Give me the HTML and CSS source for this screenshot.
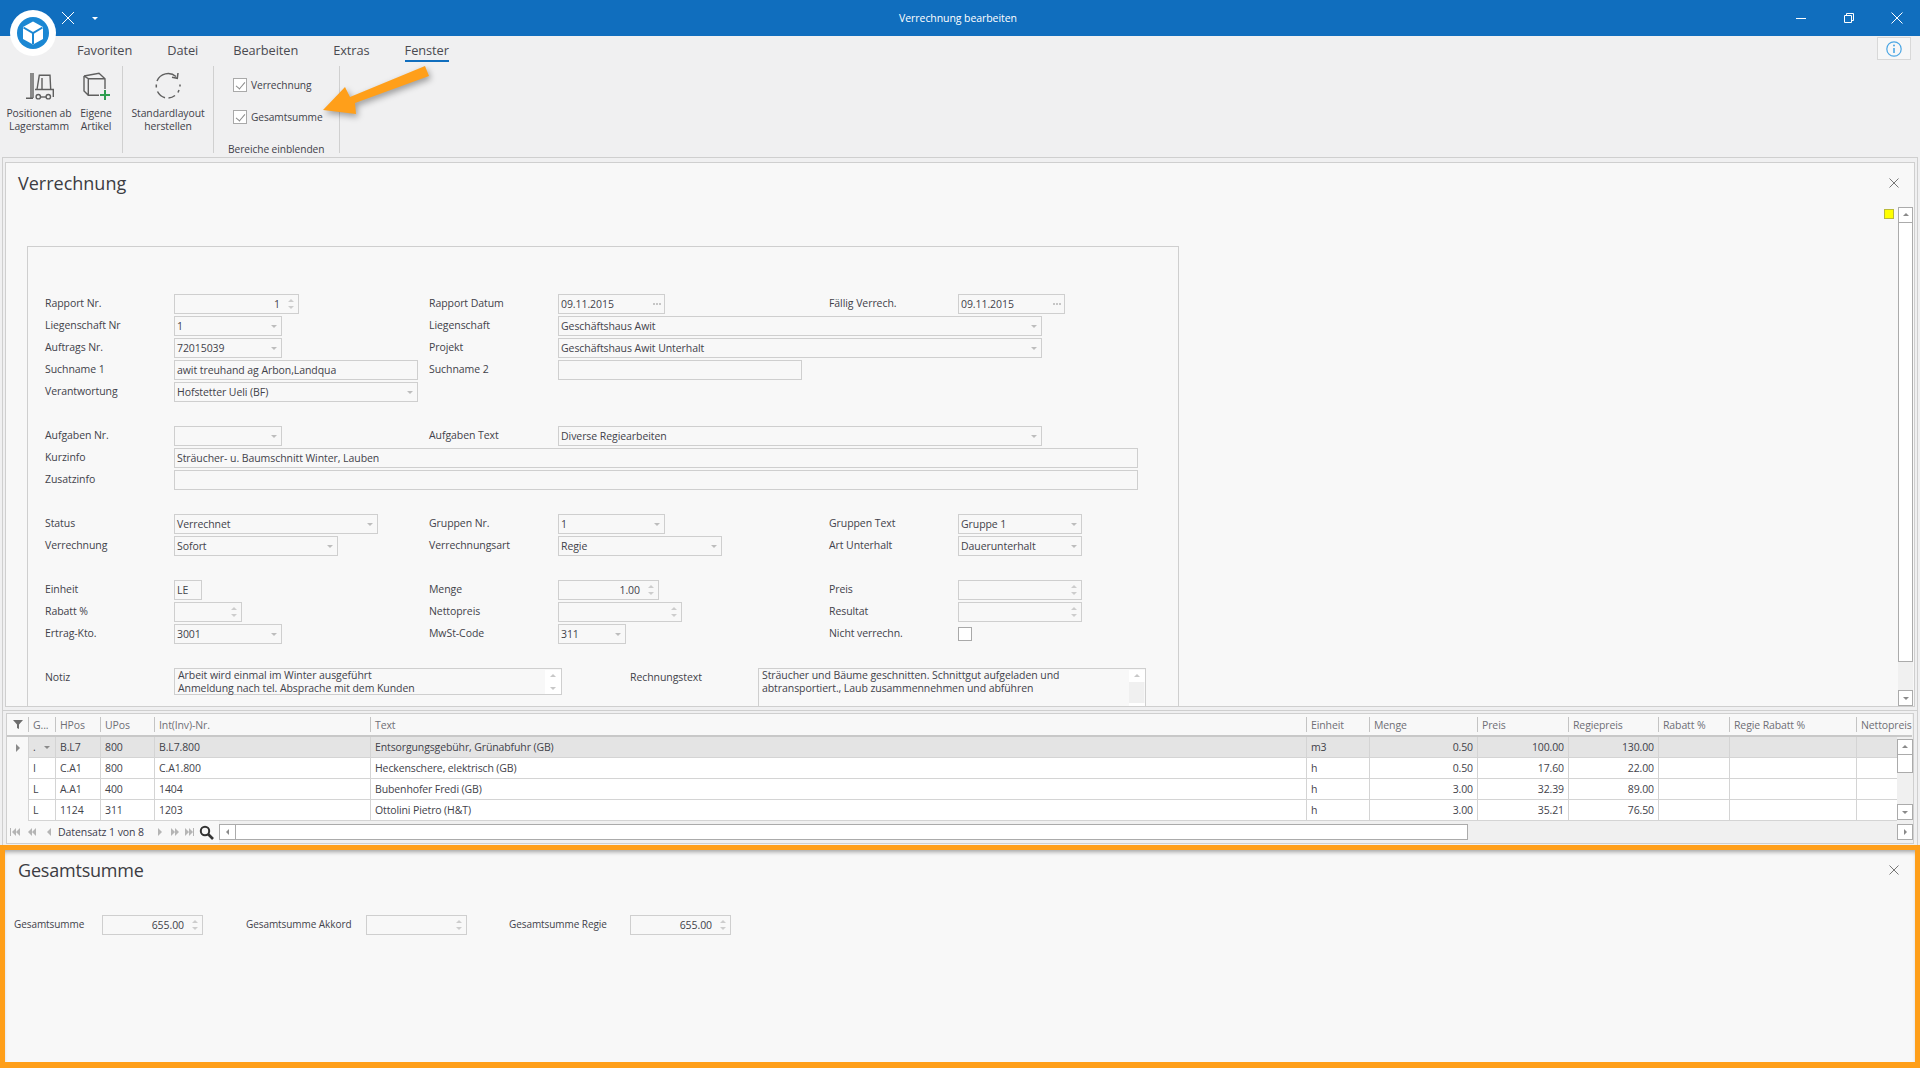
FILE: index.html
```html
<!DOCTYPE html>
<html lang="de">
<head>
    <meta charset="UTF-8">
    <title>Verrechnung bearbeiten</title>
    <link rel="stylesheet" href="styles.css">
</head>
<body>
    <svg class="logo" width="46" height="46" viewBox="0 0 46 46">
        <circle cx="23" cy="23" r="23" fill="#fff"/>
        <circle cx="23" cy="23" r="16" fill="#1b87d3"/>
        <path d="M23 11.5 33 17v12l-10 5.5L13 29V17z" fill="#fff"/>
        <path d="M13.5 17.5 23 23l9.5-5.5M23 23v11" fill="none" stroke="#1b87d3" stroke-width="2"/>
    </svg>

    <svg class="callout" width="120" height="60" viewBox="0 0 120 60">
        <path d="M3 49 25 26 30 36 105 5 109 15 35 42 36 53z" fill="#ff9f1a"/>
    </svg>

    <header class="titlebar">
        <div class="quick">
            <svg width="12" height="12" viewBox="0 0 12 12"><path d="M0 0 12 12M12 0 0 12" stroke="#fff" fill="none"/></svg>
            <span class="quick-arrow"></span>
        </div>
        <div class="window-title">Verrechnung bearbeiten</div>
        <div class="window-btns">
            <span class="window-btn"><svg width="12" height="12" viewBox="0 0 12 12"><path d="M1 6.5h10" stroke="#fff"/></svg></span>
            <span class="window-btn"><svg width="12" height="12" viewBox="0 0 12 12"><path d="M1.5 3.5h7v7h-7zM3.5 3.5v-2h7v7h-2" stroke="#fff" fill="none"/></svg></span>
            <span class="window-btn"><svg width="12" height="12" viewBox="0 0 12 12"><path d="M.5.5l11 11M11.500.5l-11 11" stroke="#fff" fill="none"/></svg></span>
        </div>
    </header>

    <section class="ribbon">
        <nav class="tabs">
            <span class="tab">Favoriten</span>
            <span class="tab">Datei</span>
            <span class="tab">Bearbeiten</span>
            <span class="tab">Extras</span>
            <span class="tab active">Fenster</span>
            <span class="info-btn">
                <svg width="18" height="18" viewBox="0 0 18 18">
                    <circle cx="9" cy="9" r="7.2" fill="none" stroke="#4aa6e4" stroke-width="1.2"/>
                    <path d="M9 8v5" stroke="#4aa6e4" stroke-width="1.6"/>
                    <circle cx="9" cy="5.400" r="1" fill="#4aa6e4"/>
                </svg>
            </span>
        </nav>
        <div class="groups">
            <div class="group group-lager">
                <div class="rb-btn btn-pos">
                    <svg class="rb-icon" width="32" height="32" viewBox="0 0 32 32" fill="none" stroke="#5f5f5f" stroke-width="1.400">
                        <path d="M7 3v25M9 3v25M2 28.300h7"/>
                        <path d="M13 19.500 15.300 5.300H26l.7 14.200"/>
                        <path d="M11 19.500h18.300V27M18 8v11"/>
                        <circle cx="14.300" cy="26.700" r="2.200"/>
                        <circle cx="24.300" cy="26.700" r="2.200"/>
                        <path d="M16.500 27h5.500"/>
                    </svg>
                    <span>Positionen ab<br>Lagerstamm</span>
                </div>
                <div class="rb-btn btn-own">
                    <svg class="rb-icon" width="32" height="32" viewBox="0 0 32 32" fill="none" stroke="#5f5f5f" stroke-width="1.400">
                        <path d="M3 6 18 3.300 24 8.700V19M7.300 8.700H24M7.300 8.700v16.600H18M3 6v15l4.300 4.300M3 6l4.300 2.700"/>
                        <path d="M24 20v10M19 25h10" stroke="#2e9e4f" stroke-width="2"/>
                    </svg>
                    <span>Eigene<br>Artikel</span>
                </div>
            </div>
            <div class="group group-layout">
                <div class="rb-btn">
                    <svg class="rb-icon" width="32" height="32" viewBox="0 0 32 32" fill="none" stroke="#5f5f5f" stroke-width="1.500">
                        <path d="M24 6.500A12 12 0 0 0 5 11M4.300 14.500v3M5.500 21.500A12 12 0 0 0 13 27.700M16.500 28A12 12 0 0 0 23 25.500M26 22.500 27 20M28 16.500v-2"/>
                        <path d="M20 7.300 25.300 8.300 26 3"/>
                    </svg>
                    <span>Standardlayout<br>herstellen</span>
                </div>
            </div>
            <div class="group group-areas">
                <label class="rb-check"><span class="check on"></span>Verrechnung</label>
                <label class="rb-check"><span class="check on"></span>Gesamtsumme</label>
                <div class="group-name">Bereiche einblenden</div>
            </div>
        </div>
    </section>

    <section class="pane pane-top">
        <div class="pane-inner">
            <div class="pane-head">
                <h2>Verrechnung</h2>
                <svg class="pane-close" width="10" height="10" viewBox="0 0 10 10"><path d="M.5.5l9 9M9.500.5l-9 9" stroke="#777" fill="none"/></svg>
            </div>
            <div class="pane-body">
                <div class="pane-content">
                    <form class="form-box">
                        <div class="form-row">
                            <span class="lbl">Rapport Nr.</span><div class="field spin w-125">1</div>
                            <span class="lbl">Rapport Datum</span><div class="field date w-107">09.11.2015</div>
                            <span class="lbl">Fällig Verrech.</span><div class="field date w-107">09.11.2015</div>
                        </div>
                        <div class="form-row">
                            <span class="lbl">Liegenschaft Nr</span><div class="field combo w-108">1</div>
                            <span class="lbl">Liegenschaft</span><div class="field combo w-484">Geschäftshaus Awit</div>
                        </div>
                        <div class="form-row">
                            <span class="lbl">Auftrags Nr.</span><div class="field combo w-108">72015039</div>
                            <span class="lbl">Projekt</span><div class="field combo w-484">Geschäftshaus Awit Unterhalt</div>
                        </div>
                        <div class="form-row">
                            <span class="lbl">Suchname 1</span><div class="field w-244">awit treuhand ag Arbon,Landqua</div>
                            <span class="lbl">Suchname 2</span><div class="field w-244"></div>
                        </div>
                        <div class="form-row">
                            <span class="lbl">Verantwortung</span><div class="field combo w-244">Hofstetter Ueli (BF)</div>
                        </div>

                        <div class="form-row spaced">
                            <span class="lbl">Aufgaben Nr.</span><div class="field combo w-108"></div>
                            <span class="lbl">Aufgaben Text</span><div class="field combo w-484">Diverse Regiearbeiten</div>
                        </div>
                        <div class="form-row">
                            <span class="lbl">Kurzinfo</span><div class="field w-964">Sträucher- u. Baumschnitt Winter, Lauben</div>
                        </div>
                        <div class="form-row">
                            <span class="lbl">Zusatzinfo</span><div class="field w-964"></div>
                        </div>

                        <div class="form-row spaced">
                            <span class="lbl">Status</span><div class="field combo w-204">Verrechnet</div>
                            <span class="lbl">Gruppen Nr.</span><div class="field combo w-107">1</div>
                            <span class="lbl">Gruppen Text</span><div class="field combo w-124">Gruppe 1</div>
                        </div>
                        <div class="form-row">
                            <span class="lbl">Verrechnung</span><div class="field combo w-164">Sofort</div>
                            <span class="lbl">Verrechnungsart</span><div class="field combo w-164">Regie</div>
                            <span class="lbl">Art Unterhalt</span><div class="field combo w-124">Dauerunterhalt</div>
                        </div>

                        <div class="form-row spaced">
                            <span class="lbl">Einheit</span><div class="field w-28">LE</div>
                            <span class="lbl">Menge</span><div class="field spin w-101">1.00</div>
                            <span class="lbl">Preis</span><div class="field spin w-124"></div>
                        </div>
                        <div class="form-row">
                            <span class="lbl">Rabatt %</span><div class="field spin w-68"></div>
                            <span class="lbl">Nettopreis</span><div class="field spin w-124"></div>
                            <span class="lbl">Resultat</span><div class="field spin w-124"></div>
                        </div>
                        <div class="form-row">
                            <span class="lbl">Ertrag-Kto.</span><div class="field combo w-108">3001</div>
                            <span class="lbl">MwSt-Code</span><div class="field combo w-68">311</div>
                            <span class="lbl">Nicht verrechn.</span><div class="check big"></div>
                        </div>

                        <div class="note-row">
                            <span class="lbl note-lbl">Notiz</span>
                            <div class="note note-short">
                                <div class="note-text">Arbeit wird einmal im Winter ausgeführt<br>Anmeldung nach tel. Absprache mit dem Kunden</div>
                                <div class="note-scroll"><span class="sb-btn up"></span><span class="sb-btn down"></span></div>
                            </div>
                            <span class="lbl note-lbl-2">Rechnungstext</span>
                            <div class="note note-long">
                                <div class="note-text">Sträucher und Bäume geschnitten. Schnittgut aufgeladen und<br>abtransportiert., Laub zusammennehmen und abführen</div>
                                <div class="note-scroll"><span class="sb-btn up"></span><span class="sb-btn down"></span></div>
                            </div>
                        </div>
                    </form>
                </div>
                <span class="marker"></span>
                <div class="vscroll vscroll-main">
                    <span class="sb-btn up"></span>
                    <span class="sb-thumb"></span>
                    <span class="sb-btn down"></span>
                </div>
            </div>
        </div>
    </section>

    <section class="pane pane-grid">
        <div class="grid-frame">
            <div class="grid-main">
                <table class="grid">
                    <colgroup>
                        <col class="c-22"><col class="c-27"><col class="c-45"><col class="c-54"><col class="c-216"><col class="c-936">
                        <col class="c-63"><col class="c-108"><col class="c-91"><col class="c-90"><col class="c-71"><col class="c-127"><col class="c-55">
                    </colgroup>
                    <thead>
                        <tr>
                            <th class="ind"><svg width="10" height="10" viewBox="0 0 10 10"><path d="M0 1h10L6 5.500V10L4 9V5.500z" fill="#6e6e6e"/></svg></th>
                            <th>G...</th><th>HPos</th><th>UPos</th><th>Int(Inv)-Nr.</th><th>Text</th><th>Einheit</th><th>Menge</th><th>Preis</th><th>Regiepreis</th><th>Rabatt %</th><th>Regie Rabatt %</th><th>Nettopreis</th>
                        </tr>
                    </thead>
                    <tbody>
                        <tr class="current">
                            <td class="ind"><span class="row-arrow"></span></td>
                            <td class="drop">.</td><td>B.L7</td><td>800</td><td>B.L7.800</td><td>Entsorgungsgebühr, Grünabfuhr (GB)</td><td>m3</td><td class="num">0.50</td><td class="num">100.00</td><td class="num">130.00</td><td></td><td></td><td></td>
                        </tr>
                        <tr>
                            <td class="ind"></td>
                            <td>I</td><td>C.A1</td><td>800</td><td>C.A1.800</td><td>Heckenschere, elektrisch (GB)</td><td>h</td><td class="num">0.50</td><td class="num">17.60</td><td class="num">22.00</td><td></td><td></td><td></td>
                        </tr>
                        <tr>
                            <td class="ind"></td>
                            <td>L</td><td>A.A1</td><td>400</td><td>1404</td><td>Bubenhofer Fredi (GB)</td><td>h</td><td class="num">3.00</td><td class="num">32.39</td><td class="num">89.00</td><td></td><td></td><td></td>
                        </tr>
                        <tr>
                            <td class="ind"></td>
                            <td>L</td><td>1124</td><td>311</td><td>1203</td><td>Ottolini Pietro (H&amp;T)</td><td>h</td><td class="num">3.00</td><td class="num">35.21</td><td class="num">76.50</td><td></td><td></td><td></td>
                        </tr>
                    </tbody>
                </table>
                <div class="vscroll vscroll-grid">
                    <span class="sb-btn up"></span>
                    <span class="sb-thumb"></span>
                    <span class="sb-btn down"></span>
                </div>
            </div>
            <div class="pager">
                <div class="pager-nav">
                    <svg class="nav-icons" width="46" height="10" viewBox="0 0 46 10" fill="#b5b5b5">
                        <path d="M0 1h1v8H0zM6 1v8L2 5zM10 1v8L6 5z"/>
                        <path d="M22 1v8l-4-4zM26 1v8l-4-4z"/>
                        <path d="M41 1v8l-4-4z"/>
                    </svg>
                    <span class="pager-text">Datensatz 1 von 8</span>
                    <svg class="nav-icons" width="40" height="10" viewBox="0 0 40 10" fill="#b5b5b5">
                        <path d="M0 1v8l4-4z"/>
                        <path d="M13 1v8l4-4zM17 1v8l4-4z"/>
                        <path d="M27 1v8l4-4zM31 1v8l4-4zM35 1h1v8h-1z"/>
                    </svg>
                    <svg class="search-icon" width="15" height="15" viewBox="0 0 15 15" fill="none" stroke="#333">
                        <circle cx="6" cy="6" r="4.200" stroke-width="2"/>
                        <path d="M9 9l5 5" stroke-width="2.600"/>
                    </svg>
                </div>
                <div class="hscroll">
                    <span class="sb-btn left"></span>
                </div>
                <span class="sb-btn right"></span>
            </div>
        </div>
    </section>

    <section class="pane-total">
        <div class="pane-head">
            <h2>Gesamtsumme</h2>
            <svg class="pane-close" width="10" height="10" viewBox="0 0 10 10"><path d="M.5.5l9 9M9.500.5l-9 9" stroke="#777" fill="none"/></svg>
        </div>
        <div class="total-row">
            <span class="lbl total-1">Gesamtsumme</span><div class="field spin w-101">655.00</div>
            <span class="lbl total-2">Gesamtsumme Akkord</span><div class="field spin w-101"></div>
            <span class="lbl total-3">Gesamtsumme Regie</span><div class="field spin w-101">655.00</div>
        </div>
    </section>
</body>
</html>
```

FILE: styles.css
```css
* {
    box-sizing: border-box;
}

body {
    margin: 0;
    height: 1068px;
    overflow: hidden;
    position: relative;
    background: #f0f0f1;
    color: #42424a;
    font-family: "Open Sans", "Liberation Sans", sans-serif;
    font-size: 10.5px;
    letter-spacing: -0.07px;
}

.logo {
    position: absolute;
    left: 10px;
    top: 10px;
}

.callout {
    position: absolute;
    left: 320px;
    top: 61px;
    filter: drop-shadow(2px 3px 3px rgba(0, 0, 0, 0.35));
}

/* title bar */
.titlebar {
    height: 36px;
    background: #106ebe;
    color: #fff;
    display: grid;
    grid-template-columns: 1fr auto 1fr;
    align-items: center;
}

.quick {
    display: flex;
    align-items: center;
    padding-left: 62px;
    gap: 18px;
}

.quick-arrow {
    border-left: 3px solid transparent;
    border-right: 3px solid transparent;
    border-top: 3px solid #fff;
}

.window-title {
    margin-right: 4px;
}

.window-btns {
    display: flex;
    justify-content: flex-end;
    margin-right: -1px;
}

.window-btn {
    width: 48px;
    display: flex;
    justify-content: center;
}

/* ribbon */
.ribbon {
    height: 121px;
}

.tabs {
    height: 30px;
    display: flex;
    padding-left: 77px;
    gap: 35px;
}

.tab {
    font-size: 12.8px;
    height: 26px;
    line-height: 28px;
    color: #4a4a50;
}

.tab.active {
    border-bottom: 2px solid #106ebe;
}

.info-btn {
    margin: 1px 9px 0 auto;
    width: 34px;
    height: 23px;
    background: #f7f7f7;
    border: 1px solid #d8d8d8;
    display: flex;
    align-items: center;
    justify-content: center;
}

.groups {
    display: flex;
    height: 87px;
}

.group {
    border-right: 1px solid #d0d0d0;
    display: flex;
}

.group-lager {
    width: 123px;
}

.group-layout {
    width: 91px;
    justify-content: center;
}

.group-areas {
    width: 126px;
    flex-direction: column;
    padding: 12px 0 0 19px;
    font-size: 10.2px;
}

.rb-btn {
    display: flex;
    flex-direction: column;
    align-items: center;
    padding-top: 4px;
    font-size: 10.4px;
    line-height: 13px;
    text-align: center;
}

.rb-icon {
    margin-bottom: 5px;
}

.btn-pos {
    width: 78px;
}

.btn-pos .rb-icon {
    margin-left: 2px;
}

.btn-own {
    width: 36px;
}

.btn-own .rb-icon {
    margin-left: 2px;
}

.rb-check {
    display: flex;
    align-items: center;
    gap: 4px;
    height: 14px;
    margin-bottom: 18px;
}

.check {
    width: 14px;
    height: 14px;
    border: 1px solid #a9a9a9;
    background: #fff;
    position: relative;
}

.check.on::after {
    content: "";
    position: absolute;
    left: 4px;
    top: 1px;
    width: 4px;
    height: 8px;
    border: solid #8a8a8a;
    border-width: 0 1px 1px 0;
    transform: rotate(40deg);
}

.group-name {
    margin: 0 0 0 -5px;
    white-space: nowrap;
}

/* panes */
.pane {
    margin: 0 2px;
    border: 1px solid #cfcfcf;
    border-bottom: 0;
}

.pane-top {
    height: 553px;
    padding: 4px 2px 0;
}

.pane-inner {
    height: 545px;
    border: 1px solid #cfcfcf;
    background: #f8f8f8;
    display: flex;
    flex-direction: column;
}

.pane-head {
    height: 44px;
    flex: none;
    display: flex;
    align-items: center;
    justify-content: space-between;
    padding: 0 15px 4px 12px;
}

.pane-head h2 {
    margin: 0;
    font-size: 18px;
    font-weight: 400;
    letter-spacing: 0;
    color: #3c3c42;
}

.pane-body {
    flex: 1;
    min-height: 0;
    display: flex;
    align-items: flex-start;
}

.pane-content {
    flex: 1;
    height: 100%;
    overflow: hidden;
    padding: 39px 0 0 21px;
}

/* form */
.form-box {
    width: 1152px;
    height: 600px;
    border: 1px solid #cfcfcf;
    padding: 47px 0 0 17px;
}

.form-row {
    display: grid;
    grid-template-columns: 129px 255px 129px 271px 129px 124px;
    height: 20px;
    margin-bottom: 2px;
    align-items: center;
}

.form-row.spaced {
    margin-top: 24px;
}

.lbl {
    white-space: nowrap;
    margin-top: -2px;
}

.field {
    position: relative;
    height: 20px;
    line-height: 18px;
    padding: 0 2px;
    border: 1px solid #cfcfcf;
    background: #f8f8f8;
    white-space: nowrap;
}

.w-28 { width: 28px; }
.w-68 { width: 68px; }
.w-101 { width: 101px; }
.w-107 { width: 107px; }
.w-108 { width: 108px; }
.w-124 { width: 124px; }
.w-125 { width: 125px; }
.w-164 { width: 164px; }
.w-204 { width: 204px; }
.w-244 { width: 244px; }
.w-484 { width: 484px; }
.w-964 { width: 964px; }

.combo::after {
    content: "";
    position: absolute;
    right: 4px;
    top: 8px;
    border-left: 3px solid transparent;
    border-right: 3px solid transparent;
    border-top: 3px solid #bdbdbd;
}

.spin {
    text-align: right;
    padding-right: 18px;
}

.spin::before,
.spin::after {
    content: "";
    position: absolute;
    right: 4px;
    border-left: 3px solid transparent;
    border-right: 3px solid transparent;
}

.spin::before {
    top: 4px;
    border-bottom: 3px solid #cdcdcd;
}

.spin::after {
    bottom: 4px;
    border-top: 3px solid #cdcdcd;
}

/* three small squares of the date picker button */
.date::after {
    content: "";
    position: absolute;
    right: 3px;
    top: 8px;
    width: 2px;
    height: 2px;
    background: #c6c6c6;
    box-shadow: -3px 0 #c6c6c6, -6px 0 #c6c6c6;
}

.check.big {
    width: 14px;
    height: 14px;
}

.note-row {
    display: flex;
    align-items: flex-start;
    margin-top: 24px;
}

.note-lbl {
    width: 129px;
    margin-top: 2px;
}

.note-lbl-2 {
    width: 128px;
    margin-left: 68px;
    margin-top: 2px;
}

.note {
    width: 388px;
    display: flex;
    border: 1px solid #cfcfcf;
    line-height: 13px;
}

.note-short {
    height: 27px;
}

.note-long {
    width: 388px;
    height: 48px;
}

.note-text {
    flex: 1;
    padding: 0 3px;
    white-space: nowrap;
}

.note-scroll {
    width: 15px;
    margin: 1px 1px 0 0;
    display: flex;
    flex-direction: column;
    justify-content: space-between;
    background: #f0f0f0;
}

.note-scroll .sb-btn {
    height: 12px;
    border: 0;
    background: #fff;
}

.note-scroll .sb-btn.up::after {
    border-bottom-color: #c8c8c8;
}

.note-scroll .sb-btn.down::after {
    border-top-color: #c8c8c8;
}

/* scroll bars */
.sb-btn {
    display: block;
    position: relative;
    flex: none;
    width: 16px;
    height: 16px;
    background: #fff;
    border: 1px solid #ababab;
}

.sb-btn::after {
    content: "";
    position: absolute;
    left: 50%;
    top: 50%;
    margin: -2px 0 0 -3px;
    border: 3px solid transparent;
}

.sb-btn.up::after {
    margin-top: -5px;
    border-bottom-color: #8a8a8a;
}

.sb-btn.down::after {
    margin-top: -1px;
    border-top-color: #8a8a8a;
}

.sb-btn.left::after {
    margin: -3px 0 0 -5px;
    border-right-color: #8a8a8a;
}

.sb-btn.right::after {
    margin: -3px 0 0 -1px;
    border-left-color: #8a8a8a;
}

.sb-thumb {
    display: block;
    width: 100%;
    background: #fff;
    border: 1px solid #ababab;
    border-top: 0;
}

.vscroll {
    display: flex;
    flex-direction: column;
    width: 15px;
    flex: none;
}

.vscroll .sb-btn {
    width: 100%;
}

.vscroll-main {
    height: 499px;
    margin-right: 1px;
    background: #f0f0f0;
}

.vscroll-main .sb-thumb {
    height: 439px;
    margin-bottom: auto;
}

.marker {
    width: 10px;
    height: 10px;
    flex: none;
    margin: 2px 4px 0 0;
    background: #ffff00;
    border: 1px solid #b9b93a;
}

/* grid */
.pane-grid {
    height: 135px;
    padding: 2px 3px 0;
}

.grid-frame {
    height: 131px;
    border: 1px solid #cfcfcf;
    background: #f0f0f0;
}

.grid-main {
    position: relative;
    height: 107px;
}

.grid {
    width: 1905px;
    table-layout: fixed;
    border-collapse: separate;
    border-spacing: 0;
    letter-spacing: -0.12px;
}

.c-22 { width: 22px; }
.c-27 { width: 27px; }
.c-45 { width: 45px; }
.c-54 { width: 54px; }
.c-216 { width: 216px; }
.c-936 { width: 936px; }
.c-63 { width: 63px; }
.c-108 { width: 108px; }
.c-91 { width: 91px; }
.c-90 { width: 90px; }
.c-71 { width: 71px; }
.c-127 { width: 127px; }
.c-55 { width: 55px; }

.grid th {
    height: 23px;
    padding: 0 0 0 4px;
    background: #f8f8f8;
    border-bottom: 2px solid #c8c8c8;
    font-weight: 400;
    text-align: left;
    color: #6f6f76;
    white-space: nowrap;
    overflow: hidden;
    position: relative;
}

.grid th::after {
    content: "";
    position: absolute;
    right: 0;
    top: 3px;
    bottom: 3px;
    width: 1px;
    background: #c4c4c4;
}

.grid th:last-child::after {
    display: none;
}

.grid td {
    height: 21px;
    padding: 0 4px 1px;
    background: #fff;
    border-right: 1px solid #d4d4d4;
    border-bottom: 1px solid #d4d4d4;
    white-space: nowrap;
    overflow: hidden;
}

.grid tr.current td {
    background: #e4e4e4;
}

.grid td.num {
    text-align: right;
}

.grid .ind,
.grid tr.current td.ind,
.grid td.ind {
    background: #f8f8f8;
    border-bottom: 0;
    padding: 0;
    text-align: center;
}

.grid th.ind {
    border-bottom: 2px solid #c8c8c8;
}

.row-arrow {
    display: inline-block;
    border-top: 4px solid transparent;
    border-bottom: 4px solid transparent;
    border-left: 4px solid #8a8a8a;
}

.grid td.drop {
    position: relative;
}

.grid td.drop::after {
    content: "";
    position: absolute;
    right: 5px;
    top: 9px;
    border-left: 3px solid transparent;
    border-right: 3px solid transparent;
    border-top: 3px solid #8a8a8a;
}

.vscroll-grid {
    position: absolute;
    right: 0;
    top: 23px;
    bottom: 0;
    width: 16px;
    padding: 2px 0 1px;
    background: #f0f0f0;
}

.vscroll-grid .sb-thumb {
    height: 18px;
    margin-bottom: auto;
}

/* pager */
.pager {
    display: flex;
    align-items: center;
    height: 23px;
    padding-bottom: 1px;
}

.pager-nav {
    width: 212px;
    height: 100%;
    flex: none;
    display: flex;
    align-items: center;
    padding-left: 3px;
    background: #f8f8f8;
}

.pager-text {
    margin: 0 14px 0 2px;
    white-space: nowrap;
    color: #3c3c4c;
}

.search-icon {
    margin-left: 1px;
}

.hscroll {
    width: 1249px;
    height: 16px;
    flex: none;
    background: #fff;
    border: 1px solid #ababab;
}

.hscroll .sb-btn {
    border-width: 0 1px 0 0;
    height: 14px;
}

.pager .sb-btn.right {
    margin-left: auto;
}

/* total area with its orange highlight */
.pane-total {
    height: 223px;
    border: 5px solid #ff9f1a;
    border-bottom-width: 6px;
    background: #f8f8f8;
    box-shadow: inset 0 4px 4px -2px rgba(0, 0, 0, 0.35);
}

.pane-total .pane-head {
    height: 40px;
    padding: 0 16px 0 13px;
}

.pane-total .pane-head h2 {
    letter-spacing: -0.2px;
}

.total-row {
    display: flex;
    align-items: center;
    margin-top: 25px;
    padding-left: 9px;
    font-size: 10px;
}

.total-row .field {
    font-size: 10.5px;
}

.total-1 { width: 88px; }
.total-2 { width: 120px; margin-left: 43px; }
.total-3 { width: 121px; margin-left: 42px; }
```
